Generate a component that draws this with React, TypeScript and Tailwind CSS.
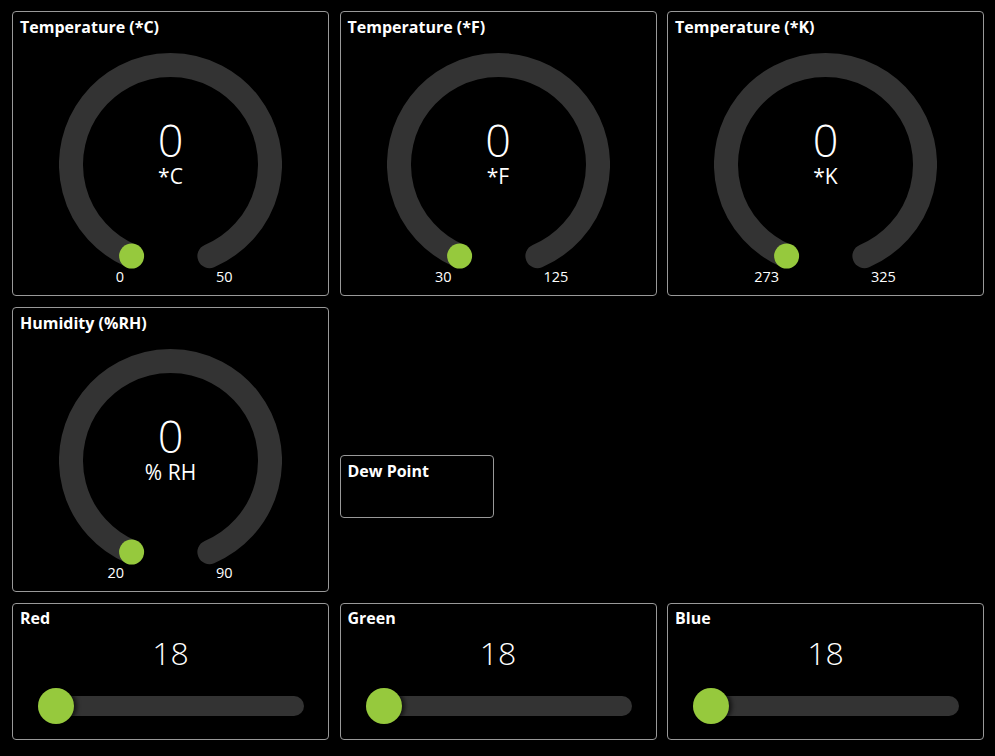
import React from "react";

const GREEN = "#96c93d";
const TITLE = "'Open Sans', Lato, sans-serif";

function Gauge({ title, unit, min, max }: { title: string; unit: string; min: string; max: string }) {
  return (
    <div className="h-[285px] rounded-[4px] border border-[#999] bg-black px-[7px] pt-[5px]">
      <div className="text-[16px] font-bold leading-[20px] text-white" style={{ fontFamily: TITLE }}>
        {title}
      </div>
      <div className="relative mx-auto mt-[16px] h-[223px] w-[223px]">
        <svg width="223" height="223" viewBox="0 0 223 223" className="absolute left-0 top-0">
          <path
            d="M 72.6 203.1 A 99.5 99.5 0 1 1 150.4 203.1"
            fill="none"
            stroke="#333333"
            strokeWidth="24"
            strokeLinecap="round"
          />
          <circle cx="72.6" cy="203.1" r="12.5" fill={GREEN} />
        </svg>
        <div className="absolute left-0 right-0 top-[64px] flex flex-col items-center text-white">
          <div className="text-[45px] font-light leading-[46px]">0</div>
          <div className="text-[21px] font-normal leading-[26px]" style={{ fontFamily: TITLE }}>
            {unit}
          </div>
        </div>
        <div className="absolute right-[158px] top-[215px] text-[14.5px] leading-[18px] text-white" style={{ fontFamily: TITLE }}>{min}</div>
        <div className="absolute left-[157px] top-[215px] text-[14.5px] leading-[18px] text-white" style={{ fontFamily: TITLE }}>{max}</div>
      </div>
    </div>
  );
}

function Slider({ title }: { title: string }) {
  return (
    <div className="h-[137px] rounded-[4px] border border-[#999] bg-black px-[7px] pt-[4px]">
      <div className="text-[16px] font-bold leading-[20px] text-white" style={{ fontFamily: TITLE }}>
        {title}
      </div>
      <div className="mt-[7px] text-center text-[32px] font-light leading-[36px] text-white">18</div>
      <div className="relative ml-[18px] mr-[17px] mt-[25px] h-[20px] rounded-full bg-[#333333]">
        <div
          className="absolute left-0 top-[-8px] h-[36px] w-[36px] rounded-full shadow-[3px_0_4px_rgba(0,0,0,0.6)]"
          style={{ backgroundColor: GREEN }}
        />
      </div>
    </div>
  );
}

export default function App() {
  return (
    <div
      className="min-h-screen bg-black pl-[12px] pr-[11px] pt-[11px]"
      style={{ fontFamily: "'Open Sans', Lato, sans-serif" }}
    >
      <div className="grid grid-cols-3 gap-x-[10.5px] gap-y-[11px]">
        <Gauge title="Temperature (*C)" unit="*C" min="0" max="50" />
        <Gauge title="Temperature (*F)" unit="*F" min="30" max="125" />
        <Gauge title="Temperature (*K)" unit="*K" min="273" max="325" />
        <Gauge title="Humidity (%RH)" unit="% RH" min="20" max="90" />
        <div className="mt-[148px] h-[63px] w-[154px] self-start rounded-[4px] border border-[#999] bg-black px-[7px] pt-[5px]">
          <div className="text-[16px] font-bold leading-[20px] text-white" style={{ fontFamily: TITLE }}>
            Dew Point
          </div>
        </div>
        <div />
        <Slider title="Red" />
        <Slider title="Green" />
        <Slider title="Blue" />
      </div>
    </div>
  );
}
